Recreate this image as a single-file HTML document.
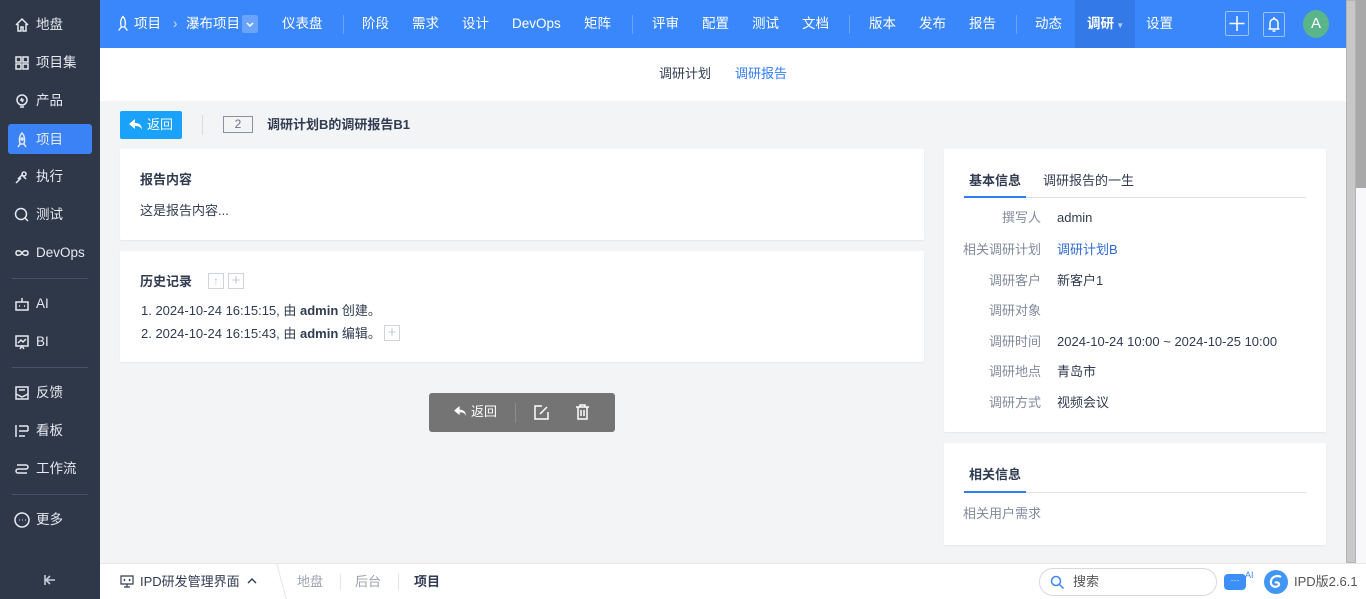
<!DOCTYPE html>
<html><head><meta charset="utf-8"><style>
*{box-sizing:border-box;margin:0;padding:0}
body{width:1366px;height:599px;overflow:hidden;font-family:"Liberation Sans","Noto Sans CJK SC",sans-serif;font-size:13px;line-height:20px;color:#313c52;background:#f3f4f6;position:relative}
.side{position:absolute;left:0;top:0;width:100px;height:599px;background:#2f3849;color:#e6e9ef}
.si{position:absolute;left:8px;width:84px;height:30px;display:flex;align-items:center;padding-left:6px;font-size:13.5px;padding-top:2px}
.si svg{width:16px;height:16px;margin-right:6px;fill:none;stroke:#e6e9ef;stroke-width:1.5}
.si.on{background:#3b82f6;border-radius:3px}
.sep{position:absolute;left:12px;width:76px;height:1px;background:#4a5366}
.top{position:absolute;left:100px;top:0;width:1246px;height:48px;background:#3a87fb;color:#fff;font-size:13.5px}
.top span{position:absolute;top:14px;white-space:nowrap;line-height:20px}
.vl{position:absolute;top:15px;width:1px;height:19px;background:#6aa3fc}
.sub{position:absolute;left:100px;top:48px;width:1246px;height:53px;background:#fff}
.card{position:absolute;background:#fff;border-radius:2px;box-shadow:0 1px 2px rgba(0,0,0,.06)}
.b{font-weight:bold}
.lab{position:absolute;width:109px;text-align:right;color:#838a9d}
.val{position:absolute;left:1057px}
.bot{position:absolute;left:100px;top:563px;width:1266px;height:36px;background:#fff;border-top:1px solid #e8e8e8}
.ic{fill:none;stroke:#fff;stroke-width:1.5}
</style></head><body>
<div class="side">
 <div class="si" style="top:9px"><svg viewBox="0 0 16 16"><path d="M2 8 8 2l6 6M4 7v7h3v-4h2v4h3V7"/></svg>地盘</div>
 <div class="si" style="top:47px"><svg viewBox="0 0 16 16"><rect x="2" y="2" width="5" height="5"/><rect x="9" y="2" width="5" height="5"/><rect x="2" y="9" width="5" height="5"/><rect x="9" y="9" width="5" height="5"/></svg>项目集</div>
 <div class="si" style="top:85px"><svg viewBox="0 0 16 16"><circle cx="8" cy="7" r="5"/><path d="M6 14h4M8 5l-1 2h2l-1 2"/></svg>产品</div>
 <div class="si on" style="top:124px"><svg viewBox="0 0 16 16"><path d="M8 1c3 3 3 7 2 11H6C5 8 5 4 8 1zM6 12l-2 3M10 12l2 3"/><circle cx="8" cy="7" r="1"/></svg>项目</div>
 <div class="si" style="top:161px"><svg viewBox="0 0 16 16"><path d="M2 14l5-5M4 10l4-4 4 4M10 3a2 2 0 1 0 .1 0"/></svg>执行</div>
 <div class="si" style="top:199px"><svg viewBox="0 0 16 16"><circle cx="7" cy="7" r="5.5"/><path d="M11 11l3 3"/></svg>测试</div>
 <div class="si" style="top:237px"><svg viewBox="0 0 16 16"><path d="M8 8c-2-3-6-3-6 0s4 3 6 0 6-3 6 0-4 3-6 0"/></svg>DevOps</div>
 <div class="sep" style="top:278px"></div>
 <div class="si" style="top:288px"><svg viewBox="0 0 16 16"><rect x="2" y="6" width="12" height="8"/><path d="M8 6V2M5 10h1M10 10h1"/></svg>AI</div>
 <div class="si" style="top:326px"><svg viewBox="0 0 16 16"><rect x="2" y="2" width="12" height="10"/><path d="M4 9l3-3 2 2 3-3M6 15l2-3 2 3"/></svg>BI</div>
 <div class="sep" style="top:367px"></div>
 <div class="si" style="top:377px"><svg viewBox="0 0 16 16"><rect x="2" y="2" width="12" height="12"/><path d="M2 9l6 3 6-3M5 5h6"/></svg>反馈</div>
 <div class="si" style="top:415px"><svg viewBox="0 0 16 16"><path d="M2 2v12M5 3h9M5 8h9M5 13h6M14 3v5"/></svg>看板</div>
 <div class="si" style="top:453px"><svg viewBox="0 0 16 16"><path d="M3 4h9a2 2 0 0 1 0 4H4a2 2 0 0 0 0 4h9"/></svg>工作流</div>
 <div class="sep" style="top:494px"></div>
 <div class="si" style="top:504px"><svg viewBox="0 0 16 16"><circle cx="8" cy="8" r="7"/><path d="M5 8h.5M8 8h.5M11 8h.5" stroke-width="2"/></svg>更多</div>
 <svg style="position:absolute;left:43px;top:574px" width="14" height="12" viewBox="0 0 14 12"><path d="M2 1v10M12 6H4M7 2 3 6l4 4" fill="none" stroke="#c8ccd5" stroke-width="1.6"/></svg>
</div>
<div class="top">
 <svg style="position:absolute;left:16px;top:15px" width="14" height="17" viewBox="0 0 16 18"><path class="ic" d="M8 1c3 3 3 8 2 12H6C5 9 5 4 8 1zM6 13l-3 4M10 13l3 4"/></svg>
 <span style="left:34px">项目</span><span style="left:73px;color:#cfe0fe">›</span><span style="left:86px">瀑布项目</span>
 <div style="position:absolute;left:142px;top:15px;width:16px;height:18px;background:#6aa3fc;border-radius:2px"><svg width="16" height="18" viewBox="0 0 16 18"><path d="M5 8l3 3 3-3" class="ic" stroke-width="1.2"/></svg></div>
 <span style="left:182px">仪表盘</span><div class="vl" style="left:243px"></div>
 <span style="left:262px">阶段</span><span style="left:312px">需求</span><span style="left:362px">设计</span><span style="left:412px">DevOps</span><span style="left:484px">矩阵</span>
 <div class="vl" style="left:532px"></div>
 <span style="left:552px">评审</span><span style="left:602px">配置</span><span style="left:652px">测试</span><span style="left:702px">文档</span>
 <div class="vl" style="left:749px"></div>
 <span style="left:769px">版本</span><span style="left:819px">发布</span><span style="left:869px">报告</span>
 <div class="vl" style="left:916px"></div>
 <span style="left:935px">动态</span>
 <div style="position:absolute;left:975px;top:0;width:60px;height:48px;background:#3479e8"></div>
 <span style="left:987px;font-weight:bold">调研<small style="font-size:8px;color:#b5cffc"> ▼</small></span>
 <span style="left:1046px">设置</span>
 <div style="position:absolute;left:1125px;top:11px;width:24px;height:25px;border:1px solid #9cc2fd;border-radius:2px"><svg width="22" height="23" viewBox="0 0 22 23"><path d="M11 4v15M3.5 11.5h15" class="ic" stroke-width="2"/></svg></div>
 <div style="position:absolute;left:1163px;top:12px;width:22px;height:25px;border:1px solid #9cc2fd;border-radius:2px"><svg width="20" height="23" viewBox="0 0 20 23"><path d="M10 4v2M6 16V10a4 4 0 0 1 8 0v6M4.5 16h11M8.5 18h3" class="ic" stroke-width="1.6"/></svg></div>
 <div style="position:absolute;left:1203px;top:10px;width:26px;height:28px;border-radius:50%;background:#5bb58a;text-align:center;line-height:28px;font-size:15px">A</div>
</div>
<div style="position:absolute;left:1346px;top:0;width:10px;height:563px;background:#c8c8c8;border:1px solid #b4b4b4"></div>
<div style="position:absolute;left:1356px;top:0;width:10px;height:563px;background:#f8f8fa"></div>
<div style="position:absolute;left:1356px;top:0;width:10px;height:188px;background:#a8a8a8"></div>
<div class="sub">
 <span style="position:absolute;left:559px;top:16px;color:#313c52">调研计划</span>
 <span style="position:absolute;left:635px;top:16px;color:#2e7cf6">调研报告</span>
</div>
<div style="position:absolute;left:120px;top:111px;width:62px;height:28px;background:#1aa1fa;color:#fff;border-radius:2px;line-height:28px;padding-left:27px">返回
 <svg style="position:absolute;left:9px;top:8px" width="14" height="12" viewBox="0 0 14 12"><path d="M6 0 0 5l6 5V7c4 0 6 1 7 4 0-5-3-7-7-7z" fill="#fff"/></svg></div>
<div style="position:absolute;left:202px;top:115px;width:1px;height:20px;background:#d8dbe0"></div>
<div style="position:absolute;left:223px;top:116px;width:30px;height:17px;border:1px solid #8a919f;text-align:center;line-height:15px;font-size:12px;color:#6a7283">2</div>
<div class="b" style="position:absolute;left:267px;top:115px">调研计划B的调研报告B1</div>
<div class="card" style="left:120px;top:149px;width:804px;height:91px">
 <div class="b" style="position:absolute;left:20px;top:21px">报告内容</div>
 <div style="position:absolute;left:20px;top:52px">这是报告内容...</div>
</div>
<div class="card" style="left:120px;top:251px;width:804px;height:111px">
 <div class="b" style="position:absolute;left:20px;top:21px">历史记录</div>
 <div style="position:absolute;left:88px;top:22px;width:16px;height:16px;border:1px solid #d0d3da;color:#c4c8d0;font-size:12px;text-align:center;line-height:14px">↑</div>
 <div style="position:absolute;left:108px;top:22px;width:16px;height:16px;border:1px solid #d0d3da;color:#c4c8d0;font-size:15px;text-align:center;line-height:14px">+</div>
 <div style="position:absolute;left:21px;top:50px">1. 2024-10-24 16:15:15, 由 <b>admin</b> 创建。</div>
 <div style="position:absolute;left:21px;top:73px">2. 2024-10-24 16:15:43, 由 <b>admin</b> 编辑。</div>
 <div style="position:absolute;left:264px;top:74px;width:16px;height:16px;border:1px solid #d0d3da;color:#c4c8d0;font-size:15px;text-align:center;line-height:14px">+</div>
</div>
<div style="position:absolute;left:429px;top:393px;width:186px;height:39px;background:#747474;border-radius:3px;color:#fff">
 <svg style="position:absolute;left:25px;top:13px" width="13" height="11" viewBox="0 0 14 12"><path d="M6 0 0 5l6 5V7c4 0 6 1 7 4 0-5-3-7-7-7z" fill="#fff"/></svg>
 <span style="position:absolute;left:42px;top:9px">返回</span>
 <div style="position:absolute;left:86px;top:10px;width:1px;height:20px;background:#8c8c8c"></div>
 <svg style="position:absolute;left:105px;top:12px" width="15" height="15" viewBox="0 0 15 15"><path d="M8 1H1v13h13V7M6 9l7-7" class="ic"/></svg>
 <svg style="position:absolute;left:146px;top:11px" width="15" height="16" viewBox="0 0 15 16"><path d="M1 3h13M5 3V1h5v2M3 3v12h9V3M6 6v6M9 6v6" class="ic"/></svg>
</div>
<div class="card" style="left:944px;top:149px;width:382px;height:283px">
 <div class="b" style="position:absolute;left:25px;top:22px">基本信息</div>
 <div style="position:absolute;left:99px;top:22px">调研报告的一生</div>
 <div style="position:absolute;left:20px;top:48px;width:342px;height:1px;background:#dfe2e8"></div>
 <div style="position:absolute;left:20px;top:47px;width:62px;height:2px;background:#2e7cf6"></div>
</div>
<div class="lab" style="left:932px;top:208px">撰写人</div><div class="val" style="top:208px">admin</div>
<div class="lab" style="left:932px;top:240px">相关调研计划</div><div class="val" style="top:240px;color:#2e6bd6">调研计划B</div>
<div class="lab" style="left:932px;top:271px">调研客户</div><div class="val" style="top:271px">新客户1</div>
<div class="lab" style="left:932px;top:301px">调研对象</div>
<div class="lab" style="left:932px;top:332px">调研时间</div><div class="val" style="top:332px">2024-10-24 10:00 ~ 2024-10-25 10:00</div>
<div class="lab" style="left:932px;top:362px">调研地点</div><div class="val" style="top:362px">青岛市</div>
<div class="lab" style="left:932px;top:393px">调研方式</div><div class="val" style="top:393px">视频会议</div>
<div class="card" style="left:944px;top:443px;width:382px;height:102px">
 <div class="b" style="position:absolute;left:25px;top:22px">相关信息</div>
 <div style="position:absolute;left:20px;top:49px;width:342px;height:1px;background:#dfe2e8"></div>
 <div style="position:absolute;left:20px;top:48px;width:62px;height:2px;background:#2e7cf6"></div>
 <div style="position:absolute;left:19px;top:61px;color:#838a9d">相关用户需求</div>
</div>
<div class="bot">
 <svg style="position:absolute;left:20px;top:11px" width="14" height="13" viewBox="0 0 14 13"><path d="M1 1h12v8H1zM7 9v3M4 12h6M5 4l-1 1 1 1M9 4l1 1-1 1" fill="none" stroke="#313c52" stroke-width="1.2"/></svg>
 <span style="position:absolute;left:40px;top:8px">IPD研发管理界面</span>
 <svg style="position:absolute;left:147px;top:13px" width="10" height="8" viewBox="0 0 10 8"><path d="M1 6l4-4 4 4" fill="none" stroke="#313c52" stroke-width="1.4"/></svg>
 <div style="position:absolute;left:170px;top:0;width:12px;height:35px;border-right:1px solid #e3e5ea;transform:skewX(15deg)"></div>
 <span style="position:absolute;left:197px;top:8px;color:#9ba1ae">地盘</span>
 <div style="position:absolute;left:240px;top:10px;width:1px;height:16px;background:#e3e5ea"></div>
 <span style="position:absolute;left:255px;top:8px;color:#9ba1ae">后台</span>
 <div style="position:absolute;left:298px;top:10px;width:1px;height:16px;background:#e3e5ea"></div>
 <span class="b" style="position:absolute;left:314px;top:8px">项目</span>
 <div style="position:absolute;left:939px;top:4px;width:178px;height:28px;border:1px solid #d6d9e0;border-radius:14px">
  <svg style="position:absolute;left:10px;top:6px" width="15" height="15" viewBox="0 0 15 15"><circle cx="6" cy="6" r="4.5" fill="none" stroke="#3a87fb" stroke-width="1.5"/><path d="M9.5 9.5l4 4" stroke="#3a87fb" stroke-width="1.5"/></svg>
  <span style="position:absolute;left:33px;top:3px;color:#555">搜索</span>
 </div>
 <div style="position:absolute;left:1124px;top:10px;width:22px;height:16px;background:#3d8ff8;border-radius:4px;color:#fff;font-size:9px;text-align:center;line-height:12px">···</div>
 <span style="position:absolute;left:1145px;top:1px;font-size:9px;color:#3a87fb">AI</span>
 <svg style="position:absolute;left:1164px;top:6px" width="24" height="24" viewBox="0 0 24 24"><circle cx="12" cy="12" r="12" fill="#4096f2"/><path d="M17 7c-3-2-9-1-10 4s4 7 7 5-1-5-3-3" fill="none" stroke="#fff" stroke-width="2.2"/></svg>
 <span style="position:absolute;left:1194px;top:8px;color:#555">IPD版2.6.1</span>
</div>
</body></html>
